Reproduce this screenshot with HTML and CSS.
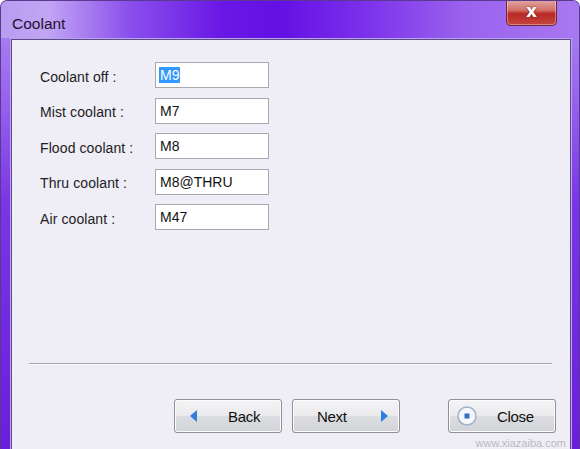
FILE: index.html
```html
<!DOCTYPE html>
<html>
<head>
<meta charset="utf-8">
<link rel="stylesheet" href="styles.css">
</head>
<body>
<div class="window">
  <div class="titlebar">
    <span class="title">Coolant</span>
    <div class="close-x"><span>x</span></div>
  </div>
  <div class="client">
    <div class="form">
      <label>Coolant off :</label><div class="field"><span class="sel">M9</span></div>
      <label>Mist coolant :</label><div class="field">M7</div>
      <label>Flood coolant :</label><div class="field">M8</div>
      <label>Thru coolant :</label><div class="field">M8@THRU</div>
      <label>Air coolant :</label><div class="field">M47</div>
    </div>
    <div class="sep"></div>
    <div class="buttons">
      <div class="btn"><svg class="ico" width="8" height="12" viewBox="0 0 8 12"><path d="M7 0 L0 6 L7 12 Z" fill="#2f7fe0"/></svg><span>Back</span></div>
      <div class="btn next"><span>Next</span><svg class="ico" width="8" height="12" viewBox="0 0 8 12"><path d="M1 0 L8 6 L1 12 Z" fill="#2f7fe0"/></svg></div>
      <div class="btn close"><svg class="ico" width="22" height="22" viewBox="0 0 22 22"><circle cx="11" cy="11" r="9" fill="#f4f6fa" stroke="#9fb2cc" stroke-width="1.5"/><rect x="8.5" y="8.5" width="5" height="5" fill="#3a6fc4"/></svg><span>Close</span></div>
    </div>
    <div class="watermark">www.xiazaiba.com</div>
  </div>
</div>
</body>
</html>
```
FILE: styles.css
```css
html, body {
  margin: 0;
  padding: 0;
  width: 580px;
  height: 449px;
  overflow: hidden;
  background: #ffffff;
}
.window {
  width: 580px;
  height: 449px;
  display: flex;
  flex-direction: column;
  border-radius: 7px 7px 0 0;
  background: linear-gradient(180deg, #b08af0 0%, #9a66ee 20%, #7a36e4 45%, #6a1edc 100%);
  box-sizing: border-box;
  border: 1px solid #5a3a90;
  border-bottom: none;
  overflow: hidden;
}
.titlebar {
  height: 37px;
  flex: none;
  display: flex;
  align-items: flex-start;
  position: relative;
  background:
    linear-gradient(90deg, #b79cf0 0%, #c2a6f4 8%, #8b50ec 22%, #6a18e6 38%, #6310e4 48%, #7a2eea 62%, #9a62ee 80%, #a878f0 100%);
}
.title {
  font-family: "Liberation Sans", Arial, sans-serif;
  font-size: 15.5px;
  color: #1e1030;
  margin: 14px 0 0 11px;
}
.close-x {
  position: absolute;
  right: 22px;
  top: -1px;
  width: 49px;
  height: 25px;
  border: 1px solid #6a2a3a;
  border-top: none;
  border-radius: 0 0 5px 5px;
  background: linear-gradient(180deg, #e0a8a4 0%, #d4726a 40%, #b82a24 55%, #c4463e 100%);
  display: flex;
  align-items: center;
  justify-content: center;
  box-shadow: inset 0 0 0 1px rgba(255,255,255,0.35);
}
.close-x span {
  font-family: "DejaVu Sans", sans-serif;
  font-weight: bold;
  font-size: 17px;
  color: #fff;
  line-height: 1;
  margin-top: -3px;
  text-shadow: 0 0 2px #5a1010;
}
.client {
  flex: 1;
  margin: 1px 8px 0 10px;
  background: #efedf5;
  border: 1px solid #5c4a8a;
  border-bottom: none;
  position: relative;
  display: flex;
  flex-direction: column;
  box-shadow: 0 0 0 1px #b9a2ee;
}
.form {
  display: grid;
  grid-template-columns: 115px 114px;
  row-gap: 9.5px;
  margin: 22px 0 0 28px;
  align-items: center;
}
.form label {
  font-family: "Liberation Sans", Arial, sans-serif;
  font-size: 14px;
  color: #222;
  letter-spacing: 0.1px;
  padding-top: 3px;
}
.field {
  height: 26px;
  box-sizing: border-box;
  background: #fff;
  border: 1px solid #a8a8b0;
  font-family: "Liberation Sans", Arial, sans-serif;
  font-size: 14px;
  color: #111;
  padding: 4px 0 0 4px;
  line-height: 16px;
}
.sel {
  background: #3399ff;
  color: #fff;
  padding: 0 1px;
  margin-left: -1px;
}
.sep {
  margin: 133px 18px 0 17px;
  height: 1px;
  background: #a4a2aa;
  border-bottom: 1px solid #fbfbfd;
}
.buttons {
  display: flex;
  margin: 34px 0 0 162px;
  gap: 10px;
}
.btn {
  width: 108px;
  height: 34px;
  box-sizing: border-box;
  border: 1px solid #8e8f94;
  border-radius: 3px;
  background: linear-gradient(180deg, #f4f4f6 0%, #ebebed 48%, #dcdde0 52%, #d2d3d7 100%);
  box-shadow: inset 0 0 0 1px #fcfcfd;
  display: flex;
  align-items: center;
  font-family: "Liberation Sans", Arial, sans-serif;
  font-size: 15px;
  color: #111;
  letter-spacing: -0.3px;
}
.btn .ico { flex: none; }
.btn:first-child { padding-left: 15px; }
.btn:first-child span { margin-left: 30px; }
.btn.next { padding-left: 24px; }
.btn.next span { margin-right: 33px; }
.btn.close { margin-left: 38px; padding-left: 7px; }
.btn.close span { margin-left: 19px; }
.watermark {
  position: absolute;
  right: 4px;
  bottom: 0px;
  font-family: "Liberation Sans", Arial, sans-serif;
  font-size: 11px;
  color: rgba(160,160,170,0.7);
}
```
